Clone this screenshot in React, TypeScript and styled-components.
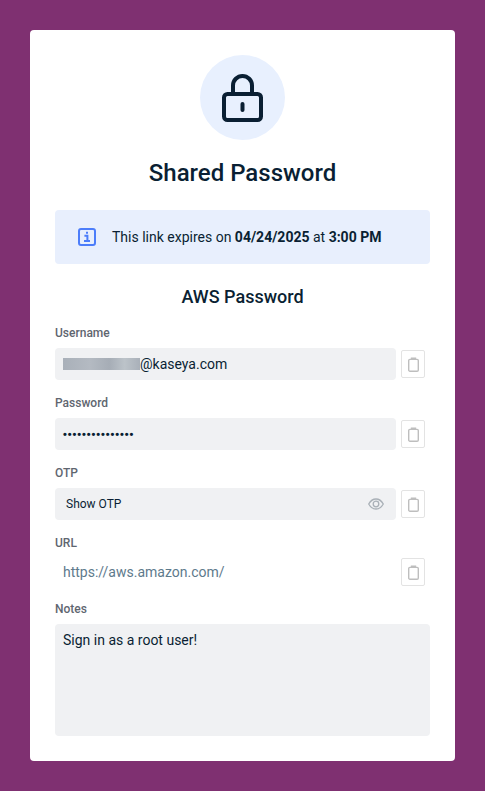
import { createGlobalStyle } from "styled-components";
import styled from "styled-components";

const GlobalStyle = createGlobalStyle`
  html, body {
    margin: 0;
    padding: 0;
    background: #7f3071;
    font-family: Roboto, "Liberation Sans", sans-serif;
    color: #0a1f33;
  }
  * {
    box-sizing: border-box;
  }
`;

const Page = styled.div`
  height: 791px;
  padding: 30px;
`;

const Card = styled.main`
  height: 731px;
  padding: 25px;
  background: #fff;
  border-radius: 4px;
  display: flex;
  flex-direction: column;
`;

const LockBadge = styled.div`
  flex: none;
  width: 85px;
  height: 85px;
  margin: 0 auto;
  border-radius: 50%;
  background: #e8f0fe;
  display: flex;
  align-items: center;
  justify-content: center;
`;

const Title = styled.h1`
  margin: 19px 0 0;
  height: 29px;
  font-size: 24px;
  line-height: 29px;
  font-weight: 500;
  text-align: center;
`;

const Banner = styled.div`
  flex: none;
  margin-top: 22px;
  height: 54px;
  padding-left: 23px;
  display: flex;
  align-items: center;
  gap: 16px;
  background: #e8effd;
  border-radius: 4px;
  font-size: 14px;

  b {
    font-weight: 700;
  }
`;

const SectionTitle = styled.h2`
  margin: 22px 0 0;
  height: 22px;
  font-size: 18px;
  line-height: 22px;
  font-weight: 500;
  text-align: center;
`;

const Field = styled.section<{ $gap?: number }>`
  margin-top: ${(p) => p.$gap ?? 15}px;
`;

const Label = styled.label`
  display: block;
  height: 23px;
  font-size: 12px;
  line-height: 16px;
  font-weight: 500;
  color: #5f6670;
`;

const Row = styled.div`
  display: flex;
  align-items: center;
  gap: 5px;
  padding-right: 5px;
`;

const Value = styled.div<{ $plain?: boolean; $small?: boolean }>`
  flex: 1;
  height: ${(p) => (p.$plain ? 28 : 32)}px;
  display: flex;
  align-items: center;
  justify-content: space-between;
  padding: 0 12px 0 ${(p) => (p.$small ? 11 : 8)}px;
  border-radius: 4px;
  background: ${(p) => (p.$plain ? "transparent" : "#f0f1f3")};
  color: ${(p) => (p.$plain ? "#5e7a8c" : "#0a1f33")};
  font-size: ${(p) => (p.$small ? 12 : 14)}px;
`;

const Email = styled.span`
  display: flex;
  align-items: center;
`;

const Redacted = styled.span`
  display: inline-block;
  width: 77px;
  height: 12px;
  background: linear-gradient(90deg, #a9b0b9, #b4bac2 35%, #a6adb6 60%, #bcc3c9 80%, #a9b0b9);
`;

const Dots = styled.span`
  font-family: "Liberation Sans", sans-serif;
  font-size: 11px;
  font-weight: 700;
  letter-spacing: 0.9px;
`;

const CopyButton = styled.button`
  width: 24px;
  height: 28px;
  padding: 0;
  flex: none;
  display: flex;
  align-items: center;
  justify-content: center;
  background: #fff;
  border: 1px solid #e3e3e3;
  border-radius: 2px;
`;

const Notes = styled.div`
  height: 112px;
  padding: 8px;
  background: #f0f1f3;
  border-radius: 4px;
  font-size: 14px;
  line-height: 17px;
`;

function LockIcon() {
  return (
    <svg width="41" height="48" viewBox="0 0 41 48" fill="none" stroke="#0a1f33" strokeWidth="4">
      <rect x="2" y="20" width="37" height="26" rx="3.5" />
      <path d="M11 20v-8.500a9.500 9.500 0 0 1 19 0V20" />
      <path d="M20.500 30v6" strokeLinecap="round" />
    </svg>
  );
}

function InfoIcon() {
  return (
    <svg width="18" height="18" viewBox="0 0 18 18" fill="none">
      <rect x="1" y="1" width="16" height="16" rx="2" stroke="#4c7dfa" strokeWidth="2" />
      <path d="M9 3.800v2M6.400 7.800h3v5M6 13h6" stroke="#4c7dfa" strokeWidth="2" />
    </svg>
  );
}

function ClipboardIcon() {
  return (
    <svg width="11" height="15" viewBox="0 0 11 15" fill="none" stroke="#bebebe" strokeWidth="1.4">
      <rect x="0.700" y="2.400" width="9.600" height="11.800" rx="1.200" />
      <path d="M3.500 2.600V1.200h4v1.400" fill="#bebebe" />
    </svg>
  );
}

function EyeIcon() {
  return (
    <svg width="16" height="12" viewBox="0 0 16 12" fill="none" stroke="#a9b0b7" strokeWidth="1.3">
      <path d="M.7 6C2.500 2.800 5 1 8 1s5.500 1.800 7.300 5c-1.800 3.200-4.300 5-7.300 5S2.500 9.200.7 6Z" />
      <circle cx="8" cy="6" r="2.800" />
    </svg>
  );
}

function Copy() {
  return (
    <CopyButton type="button" aria-label="Copy">
      <ClipboardIcon />
    </CopyButton>
  );
}

export default function App() {
  return (
    <Page>
      <GlobalStyle />
      <Card>
        <LockBadge>
          <LockIcon />
        </LockBadge>
        <Title>Shared Password</Title>
        <Banner>
          <InfoIcon />
          <span>
            This link expires on <b>04/24/2025</b> at <b>3:00 PM</b>
          </span>
        </Banner>
        <SectionTitle>AWS Password</SectionTitle>

        <Field $gap={17}>
          <Label>Username</Label>
          <Row>
            <Value>
              <Email>
                <Redacted />@kaseya.com
              </Email>
            </Value>
            <Copy />
          </Row>
        </Field>

        <Field>
          <Label>Password</Label>
          <Row>
            <Value>
              <Dots>•••••••••••••••</Dots>
            </Value>
            <Copy />
          </Row>
        </Field>

        <Field>
          <Label>OTP</Label>
          <Row>
            <Value $small>
              Show OTP
              <EyeIcon />
            </Value>
            <Copy />
          </Row>
        </Field>

        <Field>
          <Label>URL</Label>
          <Row>
            <Value $plain>https://aws.amazon.com/</Value>
            <Copy />
          </Row>
        </Field>

        <Field>
          <Label>Notes</Label>
          <Notes>Sign in as a root user!</Notes>
        </Field>
      </Card>
    </Page>
  );
}
